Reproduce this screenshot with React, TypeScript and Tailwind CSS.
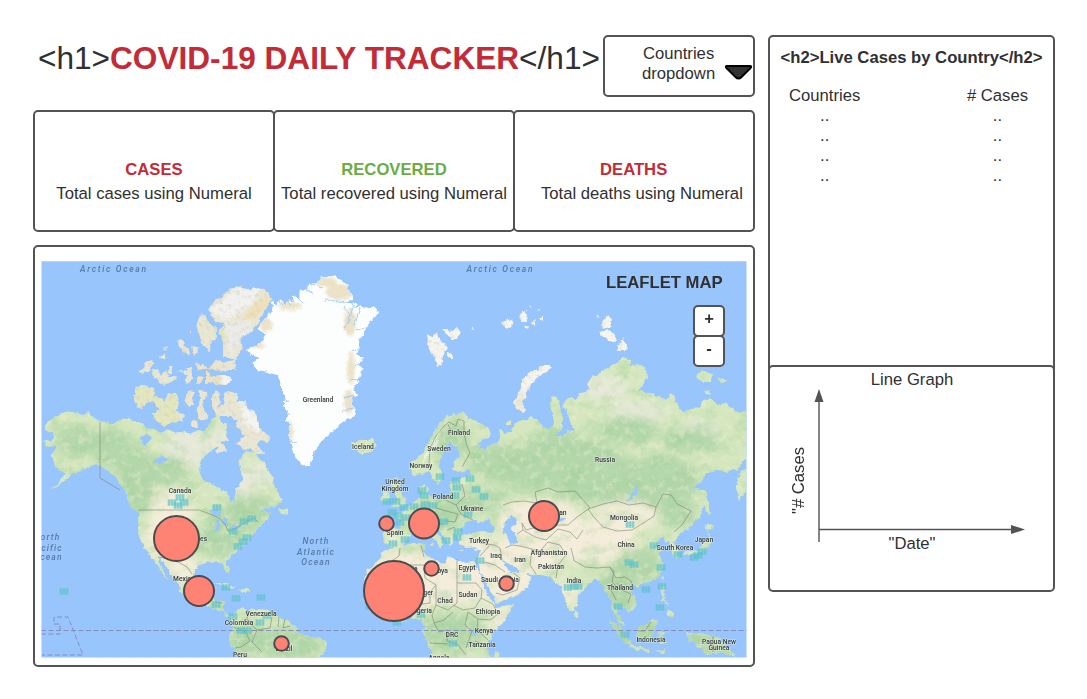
import type { ReactNode } from "react";

const NORTH_AMERICA =
  "M46 425L51 419L58 416L68 410L76 413L83 415L89 413L96 420L109 424L118 421L128 417L132 421L139 421L146 427L153 428L160 433L169 430L176 434L183 430L190 434L198 430L204 433L209 425L214 417L218 414L222 424L228 423L226 436L229 441L223 440L217 447L209 452L202 460L199 470L203 480L213 484L223 490L228 494L230 502L234 501L236 490L243 478L240 468L239 460L246 452L253 450L260 460L265 462L267 470L273 477L274 487L283 500L275 507L266 508L260 512L270 512L268 519L264 522L256 530L249 540L243 545L238 551L230 557L226 562L230 569L229 574L225 571L223 564L216 562L208 563L199 565L195 569L194 576L191 587L194 595L201 597L206 590L215 589L213 598L216 601L224 601L224 612L232 617L239 617L236 620L228 617L220 611L212 608L204 604L196 603L187 597L180 592L179 586L171 575L165 565L159 557L160 566L166 576L168 580L162 573L157 565L153 558L147 552L142 543L138 533L138 522L140 513L132 508L127 499L125 490L119 483L114 475L106 470L97 464L88 466L83 470L76 471L71 476L61 484L49 490L58 483L66 474L60 471L55 467L53 461L51 456L56 450L56 446L47 447L43 442L50 440L54 436L50 432L45 429Z";
const SOUTH_AMERICA =
  "M231 617L236 611L243 607L246 611L256 609L269 610L273 613L279 617L290 622L294 626L297 631L304 635L317 637L327 643L325 650L320 659L243 659L238 655L234 648L229 641L228 637L232 632L233 625Z";
const GREENLAND =
  "M273 307L271 300L276 305L281 299L285 305L290 299L295 303L292 296L299 300L300 288L307 291L308 284L317 283L322 277L330 275L337 277L343 282L348 285L347 289L353 293L353 300L345 303L357 303L354 308L362 306L368 308L374 307L378 312L374 318L370 322L366 328L363 336L358 340L359 349L357 354L363 358L358 363L363 369L360 376L357 383L353 389L357 395L351 398L352 405L356 409L356 415L347 419L340 424L333 431L327 436L320 443L316 449L313 456L310 467L305 466L300 464L296 456L292 450L290 440L288 435L291 424L286 420L288 412L284 405L284 395L281 387L280 381L277 375L268 372L257 370L252 363L260 358L251 355L247 350L255 346L262 342L266 334L258 330L262 322L267 317Z";
const EURASIA =
  "M410 463L418 458L423 452L428 444L433 434L438 425L445 418L450 415L456 414L463 412L468 418L476 421L487 427L491 433L489 438L480 440L479 446L486 449L492 444L498 443L500 436L499 428L504 431L506 434L511 431L515 423L523 421L530 417L537 420L543 426L548 429L554 424L553 414L550 405L551 398L557 397L560 406L562 418L562 429L555 436L562 436L569 430L575 431L570 422L567 410L562 408L564 401L571 397L576 400L580 392L590 390L587 383L594 377L603 370L613 365L620 360L624 357L630 360L630 366L638 364L645 367L647 377L642 385L638 391L646 392L653 394L661 398L667 400L670 393L675 399L679 408L684 412L692 408L700 407L703 400L710 399L717 405L724 403L734 410L747 413L747 457L742 462L738 470L733 469L727 473L718 470L707 473L702 480L693 490L697 489L704 496L704 507L700 517L693 523L688 529L681 533L676 537L674 543L678 551L678 557L673 558L671 550L669 542L663 540L664 536L657 542L655 547L663 547L658 552L661 559L664 566L661 573L657 579L650 582L643 583L638 587L632 583L628 588L634 596L637 603L634 609L628 613L626 608L620 606L617 602L616 609L620 617L625 626L622 626L616 617L613 610L611 600L607 594L603 587L599 581L595 578L589 584L583 590L578 595L577 604L573 612L569 610L566 601L562 594L561 586L555 583L551 577L540 575L527 574L519 571L513 566L507 562L501 561L507 568L510 573L519 574L521 570L531 579L527 588L518 594L508 599L496 603L492 594L487 583L480 570L478 560L480 551L475 547L466 548L459 544L458 537L453 533L454 540L450 546L445 539L441 531L435 528L438 535L444 541L440 548L437 542L431 536L427 531L419 533L412 534L406 541L402 547L395 548L389 545L384 543L383 535L385 528L391 527L400 528L401 520L396 515L399 513L406 509L412 503L418 499L422 494L419 489L424 484L428 488L428 494L434 498L441 499L449 497L451 489L450 482L456 480L465 477L474 474L468 470L458 473L452 469L454 462L460 455L457 447L451 449L448 459L446 466L443 478L438 485L434 480L429 471L422 474L413 475L410 469Z";
const AFRICA =
  "M386 550L393 548L399 547L408 544L417 543L425 544L424 552L430 558L440 562L444 563L449 556L456 560L466 563L474 562L478 569L480 574L484 586L488 597L494 602L496 607L504 606L513 604L510 612L504 622L495 631L489 641L488 649L490 659L431 659L430 650L428 643L423 634L424 627L422 620L416 619L410 617L400 622L392 618L383 618L374 611L368 606L363 596L366 588L364 580L367 570L374 564L380 559L382 554Z";

const ARCTIC_ISLANDS =
  "M208 310L213 302L223 295L229 289L239 287L250 290L258 287L266 290L271 298L268 306L263 313L258 322L253 330L248 334L240 339L242 349L236 360L229 358L223 356L223 343L218 330L226 323L215 322Z" +
  "M196 328L199 316L203 313L209 322L216 328L216 339L211 344L210 351L203 346L200 336Z" +
  "M196 366L203 364L209 368L215 360L224 363L234 361L236 369L225 371L213 370Z" +
  "M206 371L212 377L220 375L229 375L232 380L227 385L215 384L206 383Z" +
  "M177 341L181 339L184 345L189 350L190 355L183 353Z M192 346L197 347L199 353L194 355Z" +
  "M161 349L168 346L167 350Z M160 357L165 353L167 358L162 360Z M139 372L144 365L151 360L154 364L148 372L143 373Z" +
  "M151 370L158 369L161 376L166 370L170 378L177 377L172 382L163 385L158 381L153 377Z M168 366L171 366L172 373L169 373Z" +
  "M177 369L183 372L187 368L193 368L193 380L185 383L187 376Z M197 376L202 377L201 384L197 383Z M195 363L205 367L199 370Z" +
  "M136 387L143 385L153 388L155 393L151 401L146 403L142 409L137 406L134 399Z" +
  "M151 398L158 396L165 402L167 393L176 393L179 400L177 411L184 414L183 422L172 421L165 426L155 419L151 413L160 411L156 405Z" +
  "M187 391L195 392L192 399L194 406L188 406L185 399Z M198 390L208 391L204 400L203 409L207 414L207 420L197 419L198 406L201 398Z" +
  "M215 391L220 393L219 407L224 403L223 394L229 391L238 394L238 402L246 401L249 410L256 413L258 427L263 432L271 437L268 443L260 441L258 446L265 454L256 454L250 448L246 451L236 443L245 436L240 429L237 422L230 416L219 416L212 409L212 399Z" +
  "M218 443L222 442L228 451L222 451L216 454Z M191 423L196 420L197 427L191 427Z M236 423L239 424L239 429L235 427Z M189 332L191 330L191 334Z";

const PALE_ISLANDS =
  "M427 334L432 337L436 332L441 341L448 347L444 353L441 365L438 366L434 356L429 349Z" +
  "M442 329L448 328L450 332L457 327L461 333L457 339L450 339Z M448 351L454 356L453 360L448 357Z M471 329L474 328L474 330Z" +
  "M501 323L511 319L513 323L507 329Z M521 313L526 311L528 321L520 321Z M531 322L536 319L535 326Z M538 318L543 316L543 321Z M524 327L529 326L528 330Z M528 306L530 306L530 308Z M538 309L540 309L539 311Z" +
  "M523 413L516 408L514 402L518 393L522 387L522 380L528 374L538 369L547 364L551 367L548 371L539 376L532 384L527 394L522 403L526 411Z" +
  "M601 323L608 315L612 320L610 327L603 329Z M599 332L609 330L615 335L617 343L609 342Z M617 351L622 338L628 345L627 351Z M596 316L600 316L599 318Z";

const TEMPERATE_ISLANDS =
  "M351 442L356 443L358 440L366 441L373 438L376 445L372 450L363 454L357 451L353 449Z" +
  "M392 481L396 477L402 483L399 488L402 495L407 500L405 505L394 507L392 505L397 501L395 494L396 489L391 486Z M383 492L389 491L390 498L384 503L381 499Z" +
  "M277 511L280 508L288 510L288 515L281 514Z M697 374L702 371L713 374L711 381L703 383L698 379Z M717 378L723 378L727 382L722 384Z M704 392L709 390L711 394L706 395Z" +
  "M507 421L510 421L510 425L506 424Z M699 490L705 490L708 497L709 508L710 515L706 511Z M706 523L713 526L708 531L705 529Z M709 531L711 541L707 549L697 553L684 556L683 553L697 550L703 543L708 539Z" +
  "M746 468L741 472L737 480L737 492L739 501L744 494L747 487Z M660 577L663 575L662 582Z M660 587L665 587L664 599L669 605L663 600Z M668 609L674 614L671 617L665 613Z" +
  "M609 619L616 623L625 632L631 645L625 643L617 633Z M637 627L648 624L653 618L657 623L653 633L648 642L638 638Z M660 631L667 632L662 636L667 643L661 644L658 638Z M630 645L650 650L649 652L631 648Z M656 651L667 648L664 653Z" +
  "M686 632L695 634L703 633L718 638L728 648L738 658L721 652L707 655L697 645L689 640Z M574 611L578 613L577 617L574 615Z M214 583L226 583L236 588L230 589L222 585Z M239 589L248 589L252 592L242 592Z" +
  "M493 658L496 651L500 655L500 659Z M430 545L434 543L433 547Z M458 550L464 550L461 551Z M474 549L478 549L475 551Z";

const INLAND_WATER =
  "M461 535L461 529L467 522L476 520L478 524L486 520L489 518L491 523L495 529L492 533L482 531L472 533Z" +
  "M505 522L511 516L518 518L515 525L510 529L516 534L517 543L510 545L508 538L503 531Z M439 462L444 450L449 442L455 447L450 458L452 468L443 479Z" +
  "M140 439L146 434L152 438L145 446Z M154 462L162 456L168 459L158 464Z M627 500L632 495L638 486L637 493L631 500Z M552 520L562 518L567 518L559 522Z" +
  "M209 512L217 509L222 514L217 517Z M216 520L219 519L219 531L215 531Z M223 517L228 518L227 526L223 524Z M231 527L240 524L242 526L233 530Z M473 630L478 632L475 637L471 634Z";

const BORDERS =
  "M100 422V478L110 484L120 490M138 510H199L210 514L219 518L225 524L228 531L236 528L246 522L254 518L258 522" +
  "M158 557L170 559L180 563L187 567L192 574M429 464L430 448L436 436L444 426L449 422L456 426L458 419L464 421L464 434L467 446L470 453L462 467M448 424L452 434" +
  "M446 500L456 505L465 496L462 484M456 505L461 514L473 520M436 508L450 512L458 514L455 522L445 521M447 530L455 527M429 512L434 520L443 525" +
  "M503 505L512 502L524 501L537 503L535 492L548 488L558 492L575 491L583 500L590 508L577 517L568 525L558 525L546 530L533 528L526 530L522 523L523 530L517 534" +
  "M588 509L603 504L617 501L629 505L643 503L656 507L654 516L645 522L632 530L617 531L603 527L593 516L588 509M656 507L663 494L671 495L677 504L691 511L682 525L674 532" +
  "M523 530L535 537L546 540L558 529L570 532L577 539L583 530M505 548L512 545L520 546L532 549L540 551L548 542M532 549L530 565L536 574M548 542L560 545L566 555L558 565L556 578" +
  "M573 560L585 567L597 568L609 567L614 571L612 582L620 590M571 548L574 560M480 543L494 545L500 548L502 560M489 546L480 556M484 562L495 565L505 572M513 573L520 578L517 590L503 595L496 593" +
  "M457 559L457 583H476M457 583V603L448 610L436 605L436 585L425 578L424 565M424 557L421 545M400 548L399 556L390 562L378 575M424 565L410 565L394 575M436 585L430 592L430 603L415 605L400 600" +
  "M476 583L482 590L481 598L475 608L463 610L453 605M481 598L493 604L498 614L490 620L478 619L468 612M478 619L477 630L488 640M468 612L465 625L472 631L466 648M436 605L432 615L434 623L444 620L453 612" +
  "M434 623L439 632L448 630L447 641L458 645L466 655M430 643L448 644M475 641L486 646M610 567L616 578L625 577L631 581L634 590M617 583L622 590L631 594L628 603M611 590L616 600" +
  "M638 631L645 631L651 622M248 610L247 620L257 630L270 628L272 617M285 619L283 628L290 626M279 617L278 627M233 627L245 631L250 641L241 647L235 648M257 630L252 642L262 652M203 599L210 597M215 602L222 603M713 636V652";

type Patch = [number, number, number, number];

const GREEN_PATCHES: Patch[] = [
  [80, 442, 26, 14], [112, 448, 20, 20], [138, 480, 18, 34], [166, 470, 24, 14], [235, 520, 30, 14], [218, 540, 24, 16], [250, 504, 24, 9],
  [170, 500, 14, 8], [290, 643, 34, 17], [248, 640, 20, 18], [222, 608, 14, 8], [452, 440, 18, 18], [492, 460, 26, 16], [530, 468, 42, 24],
  [600, 478, 54, 26], [660, 482, 40, 26], [628, 430, 30, 14], [582, 450, 30, 12], [690, 440, 30, 12], [440, 512, 28, 18], [480, 500, 26, 12],
  [640, 565, 24, 16], [618, 588, 18, 26], [452, 632, 34, 20], [648, 634, 14, 16], [676, 515, 20, 12], [620, 630, 14, 18], [710, 644, 30, 12], [590, 565, 8, 6], [555, 440, 24, 12],
];
const SAND_PATCHES: Patch[] = [
  [172, 515, 22, 18], [162, 538, 18, 20], [184, 568, 14, 14], [170, 500, 18, 10], [410, 580, 60, 28], [465, 578, 46, 26], [506, 580, 30, 20],
  [503, 552, 34, 14], [540, 520, 42, 20], [545, 555, 20, 16], [592, 540, 46, 18], [625, 516, 34, 14], [568, 590, 10, 14], [498, 616, 10, 14], [467, 541, 16, 5], [390, 538, 10, 6], [590, 550, 36, 12],
];
const PALE_PATCHES: Patch[] = [
  [190, 448, 28, 18], [220, 440, 14, 14], [240, 480, 12, 20], [258, 475, 14, 12], [600, 388, 30, 12], [640, 410, 30, 10], [700, 430, 20, 10],
];

const ICE_SHADE: Patch[] = [
  [340, 292, 14, 8], [350, 322, 6, 14], [290, 306, 12, 4], [266, 325, 6, 7], [257, 345, 8, 3], [351, 368, 4, 16], [349, 402, 5, 12], [290, 432, 3, 12], [325, 282, 12, 5],
];

const HOTSPOTS: [number, number][] = [
  [172, 502], [178, 505], [184, 502], [180, 497], [217, 507], [244, 521], [252, 518], [233, 531], [238, 546], [243, 541], [247, 537],
  [64, 591], [226, 587], [236, 598], [261, 597], [216, 604], [233, 616], [260, 622], [241, 630], [247, 630], [267, 615],
  [422, 490], [424, 495], [398, 515], [404, 507], [414, 506], [425, 504], [433, 505], [400, 522], [406, 517], [392, 512], [387, 501], [396, 501],
  [440, 476], [456, 480], [457, 487], [455, 495], [470, 478], [476, 489], [484, 496], [468, 514], [444, 521], [458, 531], [457, 537], [446, 540],
  [393, 543], [405, 539], [480, 560], [467, 577], [453, 643], [421, 614], [397, 622], [370, 606], [568, 587], [574, 586], [578, 586], [630, 524], [654, 545],
  [629, 562], [634, 564], [661, 567], [662, 586], [646, 589], [618, 606], [660, 607], [625, 634], [678, 554], [694, 557], [698, 555], [702, 551],
];

const LABELS: [number, number, string][] = [
  [318, 402, "Greenland"], [363, 449, "Iceland"], [459, 435, "Finland"], [439, 451, "Sweden"], [421, 468, "Norway"], [605, 462, "Russia"],
  [180, 493, "Canada"], [395, 484, "United"], [395, 491, "Kingdom"], [443, 499, "Poland"], [472, 511, "Ukraine"], [395, 535, "Spain"],
  [479, 543, "Turkey"], [496, 558, "Iraq"], [520, 562, "Iran"], [549, 555, "Afghanistan"], [551, 569, "Pakistan"], [467, 570, "Egypt"],
  [500, 582, "Saudi Arabia"], [468, 597, "Sudan"], [445, 603, "Chad"], [488, 614, "Ethiopia"], [484, 633, "Kenya"], [452, 637, "DRC"],
  [482, 647, "Tanzania"], [439, 660, "Angola"], [574, 583, "India"], [624, 520, "Mongolia"], [626, 547, "China"], [675, 550, "South Korea"],
  [704, 542, "Japan"], [620, 590, "Thailand"], [651, 642, "Indonesia"], [719, 644, "Papua New"], [719, 650, "Guinea"], [184, 581, "Mexico"],
  [261, 616, "Venezuela"], [239, 625, "Colombia"], [240, 657, "Peru"], [187, 541, "United States"], [440, 573, "Libya"], [425, 595, "Niger"],
  [421, 613, "Nigeria"], [407, 571, "Algeria"], [284, 651, "Brazil"], [549, 515, "Kazakhstan"],
];

const CASES: [number, number, number][] = [
  [176.5, 538.5, 22.5], [199, 591, 15], [386.5, 523.5, 7.3], [424, 523.5, 15], [544, 516, 15], [394, 591, 30], [431.5, 568.5, 7.3], [506.5, 583.5, 7.3], [281.5, 643.5, 7.3],
];

function Ellipses({ items, fill }: { items: Patch[]; fill: string }) {
  return (
    <g fill={fill}>
      {items.map(([cx, cy, rx, ry], i) => (
        <ellipse key={i} cx={cx} cy={cy} rx={rx} ry={ry} />
      ))}
    </g>
  );
}

function WorldMap() {
  return (
    <svg className="block h-[397px] w-[706px]" viewBox="41 261 706 397" role="img" aria-label="World map">
      <defs>
        <clipPath id="frame"><rect x="41.5" y="261.3" width="705" height="396.2" /></clipPath>
        <clipPath id="land"><path d={NORTH_AMERICA + SOUTH_AMERICA + EURASIA + AFRICA + TEMPERATE_ISLANDS} /></clipPath>
        <clipPath id="ice"><path d={GREENLAND} /></clipPath>
        <clipPath id="arctic"><path d={ARCTIC_ISLANDS + PALE_ISLANDS} /></clipPath>
        <filter id="coast" filterUnits="userSpaceOnUse" x="30" y="250" width="730" height="420" colorInterpolationFilters="sRGB">
          <feTurbulence type="fractalNoise" baseFrequency="0.2" numOctaves="2" seed="4" result="n" />
          <feDisplacementMap in="SourceGraphic" in2="n" scale="5" xChannelSelector="R" yChannelSelector="G" />
          <feGaussianBlur stdDeviation="0.65" />
        </filter>
        <filter id="soft" x="-20%" y="-20%" width="140%" height="140%"><feGaussianBlur stdDeviation="5" /></filter>
        <filter id="smear"><feGaussianBlur stdDeviation="1.6" /></filter>
        <filter id="faint"><feGaussianBlur stdDeviation="0.35" /></filter>
        <filter id="forest" filterUnits="userSpaceOnUse" x="41" y="261" width="706" height="397" colorInterpolationFilters="sRGB">
          <feTurbulence type="fractalNoise" baseFrequency="0.06 0.09" numOctaves="4" seed="9" />
          <feColorMatrix values="0 0 0 0 0.60  0 0 0 0 0.80  0 0 0 0 0.57  3.4 0 0 0 -1.6" />
        </filter>
        <filter id="ridge" filterUnits="userSpaceOnUse" x="41" y="261" width="706" height="397" colorInterpolationFilters="sRGB">
          <feTurbulence type="fractalNoise" baseFrequency="0.14" numOctaves="3" seed="21" />
          <feColorMatrix values="0 0 0 0 0.95  0 0 0 0 0.94  0 0 0 0 0.83  0 4 0 0 -2" />
        </filter>
        <filter id="rock" filterUnits="userSpaceOnUse" x="41" y="261" width="706" height="397" colorInterpolationFilters="sRGB">
          <feTurbulence type="fractalNoise" baseFrequency="0.22" numOctaves="3" seed="2" />
          <feColorMatrix values="0 0 0 0 0.78  0 0 0 0 0.76  0 0 0 0 0.71  0 0 4 0 -2.1" />
        </filter>
      </defs>
      <g clipPath="url(#frame)">
        <rect x="41" y="261" width="706" height="397" fill="#98c5fc" />
        <g filter="url(#coast)">
          <g clipPath="url(#land)">
            <rect x="41" y="261" width="706" height="397" fill="#d5e7bf" />
            <g filter="url(#soft)">
              <Ellipses items={PALE_PATCHES} fill="#e6e9d9" />
              <Ellipses items={GREEN_PATCHES} fill="#b3d7ab" />
              <Ellipses items={SAND_PATCHES} fill="#f5eddb" />
            </g>
            <rect x="41" y="261" width="706" height="397" filter="url(#forest)" opacity="0.33" />
            <rect x="41" y="261" width="706" height="397" filter="url(#ridge)" opacity="0.36" />
          </g>
          <path d={ARCTIC_ISLANDS} fill="#e9e6d3" />
          <path d={PALE_ISLANDS} fill="#f5f5ee" />
          <g clipPath="url(#arctic)">
            <g filter="url(#smear)">
              <path d="M209 310L235 289L262 286L252 305L225 321Z" fill="#f1f1ef" />
              <path d="M240 322L252 307L271 292L268 308L249 322Z" fill="#eee0b8" />
              <path d="M225 322L252 320L250 334L238 345L232 358L226 345Z" fill="#ecebe7" />
              <path d="M215 328L222 326L227 338L222 343Z" fill="#dce5bd" />
              <path d="M196 366H220V384H196Z" fill="#eee2c0" />
              <path d="M221 373H232V386H222Z M239 401L258 415L262 433L245 425Z" fill="#f4f4f1" />
              <path d="M132 385H180V428H132Z" fill="#e3e7c0" />
              <path d="M514 385L524 392V412H512Z" fill="#eceadb" />
            </g>
            <rect x="41" y="261" width="706" height="195" filter="url(#rock)" opacity="0.35" />
          </g>
          <path d={GREENLAND} fill="#fcfefd" />
          <g clipPath="url(#ice)">
            <g filter="url(#smear)"><Ellipses items={ICE_SHADE} fill="#ebe2c8" /></g>
            <g fill="none" stroke="#98c5fc" strokeWidth="0.9">
              <path d="M278 298L282 306M287 297L291 307M296 295L302 303M303 287L314 294M311 283L322 289M325 300L348 302M343 307L352 318M354 303L350 318L344 330M360 308L354 325M364 328L356 331M359 348L353 352M362 363L354 366M358 379L350 381M354 395L344 398M354 407L342 412M282 398L289 402M286 412L291 416M291 440L297 443" />
            </g>
          </g>
          <path d={INLAND_WATER} fill="#98c5fc" />
          <path d="M443 427L432 444L424 459M424 461L438 440" stroke="#f4f6ec" strokeWidth="1.6" fill="none" opacity="0.7" />
        </g>
        <path d={BORDERS} fill="none" stroke="#787d70" strokeWidth="0.8" opacity="0.7" strokeLinejoin="round" filter="url(#faint)" />
        <g fill="none" stroke="#8288b5" strokeWidth="0.9" strokeDasharray="5 2.5">
          <path d="M41 630.5H747" />
          <path d="M41 634H60V624H54V617H68L83 655H42" />
        </g>
        <g fill="#5cc3cb" filter="url(#faint)">
          {HOTSPOTS.map(([x, y], i) => (
            <g key={i}>
              <rect x={x - 4.5} y={y - 2.5} width="9" height="6" opacity="0.5" />
              <path d={`M${x - 3} ${y - 3}v7M${x} ${y - 3}v7M${x + 3} ${y - 3}v7`} stroke="#5cc3cb" strokeWidth="1.4" opacity="0.55" />
            </g>
          ))}
        </g>
        <g className="font-['Roboto',sans-serif]" fill="#557ba9" fontStyle="italic" fontWeight="500" filter="url(#faint)">
          <g fontSize="8.5">
            <text x="80" y="272" textLength="66">Arctic Ocean</text>
            <text x="466.500" y="272" textLength="66">Arctic Ocean</text>
          </g>
          <g fontSize="8.5" letterSpacing="1.2" textAnchor="middle">
            <text x="316" y="544">North</text>
            <text x="316" y="554.5">Atlantic</text>
            <text x="316" y="564.5">Ocean</text>
            <text x="47" y="540">North</text>
            <text x="46" y="550.5">Pacific</text>
            <text x="48" y="560">Ocean</text>
          </g>
        </g>
        <g className="font-['Roboto',sans-serif]" fontSize="6.7" fontWeight="500" fill="#333b3b" textAnchor="middle" stroke="#f4f6ed" strokeWidth="1.2" strokeOpacity="0.55" paintOrder="stroke">
          {LABELS.map(([x, y, label]) => (
            <text key={label} x={x} y={y}>{label}</text>
          ))}
        </g>
      </g>
      <g fill="#ff8375" stroke="#4c4c4e" strokeWidth="2">
        {CASES.map(([cx, cy, r]) => (
          <circle key={`${cx}-${cy}`} cx={cx} cy={cy} r={r} />
        ))}
      </g>
    </svg>
  );
}

function Panel({ className, children }: { className: string; children: ReactNode }) {
  return <div className={`border-2 border-[#535353] bg-white ${className}`}>{children}</div>;
}

function Stat({ title, text, tone, className }: { title: string; text: string; tone: string; className: string }) {
  return (
    <Panel className={`flex h-[122px] w-[242px] shrink-0 flex-col items-center whitespace-nowrap rounded-[5px] pt-[46px] leading-6 ${className}`}>
      <div className={`font-bold ${tone}`}>{title}</div>
      <div>{text}</div>
    </Panel>
  );
}

function Column({ title, className }: { title: string; className: string }) {
  return (
    <div className={`text-center leading-5 ${className}`}>
      <div>{title}</div>
      {[0, 1, 2, 3].map((row) => (
        <div key={row}>..</div>
      ))}
    </div>
  );
}

export default function App() {
  return (
    <div className="flex h-[699px] w-[1087px] gap-[13px] overflow-hidden bg-white pl-[33px] pt-[35px] font-['Liberation_Sans',Arial,sans-serif] text-[16.67px] text-[#303030]">
      <main className="w-[722px] shrink-0">
        <header className="flex h-[62px] justify-between">
          <h1 className="w-[567px] shrink-0 whitespace-nowrap pl-[5px] pt-[3px] text-[31.6px] leading-10">
            &lt;h1&gt;<span className="font-bold text-[#c32b37]">COVID-19 DAILY TRACKER</span>&lt;/h1&gt;
          </h1>
          <Panel className="flex w-[152px] shrink-0 rounded-[5px] pl-[37px] pt-[7px]">
            <div className="text-center leading-5">Countries<br />dropdown</div>
            <svg className="ml-[9px] mt-[19px] h-[18px] w-[30px] shrink-0" viewBox="0 0 30 18">
              <path d="M3 3H26Q28 3 26.500 5L17.500 14Q14.500 17 11.500 14L2.500 5Q1 3 3 3Z" fill="#333" stroke="#000" strokeWidth="2" />
            </svg>
          </Panel>
        </header>
        <section className="mt-[13px] flex">
          <Stat title="CASES" text="Total cases using Numeral" tone="text-[#c32b37]" className="" />
          <Stat title="RECOVERED" text="Total recovered using Numeral" tone="text-[#6aac45]" className="-ml-[2px]" />
          <Panel className="-ml-[2px] h-[122px] w-[242px] whitespace-nowrap rounded-[5px] pt-[46px] leading-6">
            <div className="pl-[85px] font-bold text-[#c32b37]">DEATHS</div>
            <div className="pl-[26px]">Total deaths using Numeral</div>
          </Panel>
        </section>
        <Panel className="relative mt-[13px] h-[422px] rounded-[5px] pl-[6px] pt-[14px]">
          <WorldMap />
          <div className="absolute left-[571px] top-[26px] whitespace-nowrap font-bold leading-5">LEAFLET MAP</div>
          <div className="absolute left-[658px] top-[58px] flex flex-col text-center font-bold">
            <button className="h-8 w-8 rounded-[5px] border-2 border-[#535353] bg-white pb-[5px] leading-[23px]">+</button>
            <button className="-mt-[2px] h-8 w-8 rounded-[5px] border-2 border-[#535353] bg-white pb-[5px] leading-[23px]">-</button>
          </div>
        </Panel>
      </main>
      <aside className="w-[287px] shrink-0">
        <Panel className="h-[340px] rounded-t-[5px] pt-[11px]">
          <h2 className="whitespace-nowrap text-center font-bold leading-5">&lt;h2&gt;Live Cases by Country&lt;/h2&gt;</h2>
          <div className="mt-[18px] flex justify-between pl-[19px] pr-[25px]">
            <Column title="Countries" className="" />
            <Column title="# Cases" className="" />
          </div>
        </Panel>
        <Panel className="-mt-[10px] h-[227px] rounded-[5px] pt-[3px]">
          <div className="pl-px text-center leading-5">Line Graph</div>
          <div className="-mt-px flex">
            <div className="flex h-[154px] w-[39px] shrink-0 items-center justify-end">
              <span className="rotate-180 whitespace-nowrap pb-[29px] leading-5 [writing-mode:vertical-rl]">"# Cases</span>
            </div>
            <svg className="ml-px h-[156px] w-[220px]" viewBox="0 0 220 156">
              <path d="M9 13V153M9 140.500H205" stroke="#535353" strokeWidth="1.400" fill="none" />
              <path d="M9 0L13.500 13H4.500ZM215 140.500L201 136V145Z" fill="#535353" />
            </svg>
          </div>
          <div className="-mt-[11px] pl-px text-center leading-5">"Date"</div>
        </Panel>
      </aside>
    </div>
  );
}
